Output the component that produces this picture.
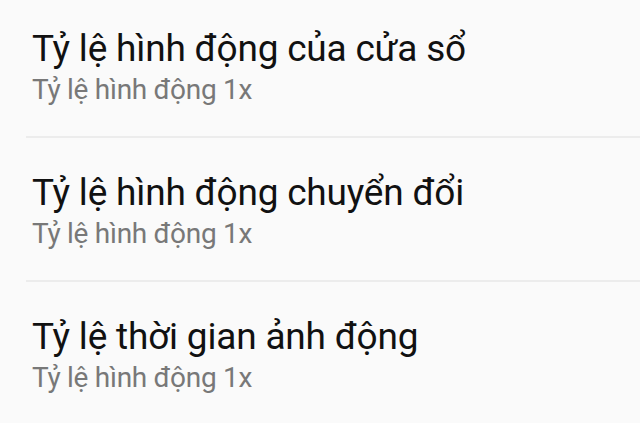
import React from 'react';

const items = [
  { title: 'Tỷ lệ hình động của cửa sổ', summary: 'Tỷ lệ hình động 1x' },
  { title: 'Tỷ lệ hình động chuyển đổi', summary: 'Tỷ lệ hình động 1x' },
  { title: 'Tỷ lệ thời gian ảnh động', summary: 'Tỷ lệ hình động 1x' },
];

export default function App() {
  return (
    <div className="w-[640px] h-[423px] overflow-hidden bg-[#fafafa] font-['Roboto',sans-serif]">
      <div className="-mt-[6px]">
        {items.map((item, i) => (
          <div key={i}>
            <div className="pl-[32px] pt-[34px] pb-[30px]">
              <div className="text-[37px] leading-[42px] tracking-[-0.2px] text-[#111111]">{item.title}</div>
              <div className="mt-[4px] text-[28px] leading-[32px] tracking-[-0.28px] text-[#787878]">{item.summary}</div>
            </div>
            {i < items.length - 1 && <div className="ml-[26px] h-[2px] bg-[#ececec]" />}
          </div>
        ))}
      </div>
    </div>
  );
}
